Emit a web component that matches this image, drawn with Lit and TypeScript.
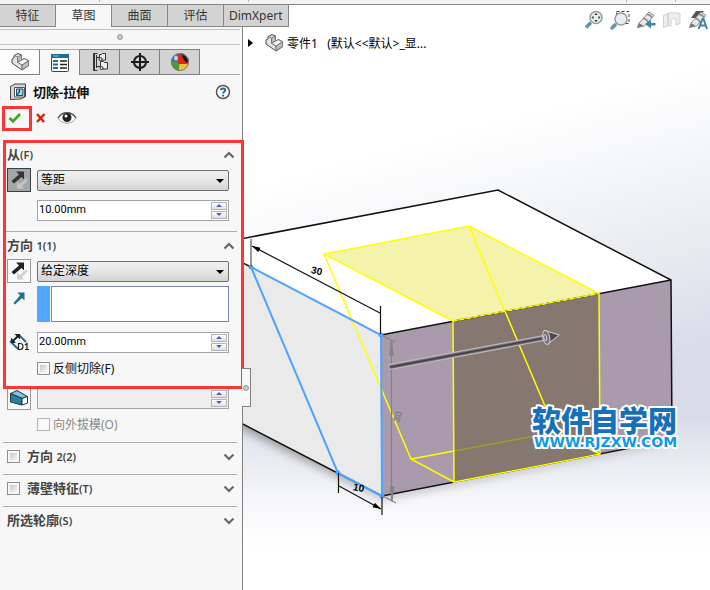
import { LitElement, html, css, svg, nothing } from "lit";
import { customElement, property } from "lit/decorators.js";

const partIcon = html`<svg width="20" height="20" viewBox="0 0 20 20" aria-hidden="true">
  <g stroke="#4a4a4a" stroke-width="1" stroke-linejoin="round">
    <path d="M4 3.5 8 1.5l3.5 1.5v5l3-1.3 4 2v5L12 18 2 11V7l2-1z" fill="#e4e4e4"/>
    <path d="M4 3.5 7.500 5v5.200L12 13v5" fill="none" stroke="#777"/>
    <path d="M7.500 5l4-2v5l-4 2zM12 13l6.500-4.300v5L12 18z" fill="#bdbdbd" stroke="#777"/>
    <path d="M7.500 10.200l4-2.200 3-1.300 4 2L12 13z" fill="#f4f4f4" stroke="#777"/>
  </g></svg>`;

const listIcon = html`<svg width="20" height="20" viewBox="0 0 20 20" aria-hidden="true">
  <rect x="1.500" y="1.500" width="17" height="17" rx="1" fill="#fff" stroke="#33434f"/>
  <path d="M1 1h18v4H1z" fill="#1f6d94"/><path d="M3 3h6" stroke="#7fc1e0"/>
  <path d="M3 7h5v2H3zM3 10.500h5v2H3zM3 14h5v2H3z" fill="#1f6d94"/>
  <path d="M10 8h7M10 11.500h7M10 15h7" stroke="#222" stroke-width="1.500"/></svg>`;

const treeIcon = html`<svg width="20" height="20" viewBox="0 0 20 20" aria-hidden="true">
  <g fill="#eee" stroke="#333"><path d="M4.500 1.500v17M6.500 5.500h4M6.500 14.500h4" fill="none"/>
  <path d="M3.500 1.500h4M3.500 18.500h4M3.500 1.500v17M6.500 3v13" fill="none"/>
  <path d="M9.500 2.500h2l1-1h3v6.500h-6zM10.500 9.500h3l1 1h3v6.500h-7z"/>
  <circle cx="10.500" cy="7" r="1.500"/><circle cx="11.500" cy="16" r="1.500"/></g></svg>`;

const targetIcon = html`<svg width="20" height="20" viewBox="0 0 20 20" aria-hidden="true">
  <circle cx="10" cy="10" r="6" fill="none" stroke="#1a1a1a" stroke-width="2"/>
  <path d="M10 1v18M1 10h18" stroke="#1a1a1a" stroke-width="2"/></svg>`;

const ballIcon = html`<svg width="20" height="20" viewBox="0 0 20 20" aria-hidden="true">
  <path d="M10 10V1a9 9 0 0 1 9 9z" fill="#333"/><path d="M10 10V1a9 9 0 0 0-9 9z" fill="#3b74c8"/>
  <path d="M10 10H1a9 9 0 0 0 8 9z" fill="#4d9c2d"/><path d="M9 19a9 9 0 0 0 10-9H10z" fill="#f0c33c"/>
  <path d="M6 3c5-3 9 1 12 9H8C8 8 7 5 6 3z" fill="#d92b1c"/><path d="M12 3c3 1 6 5 6 8-3-1-5-4-6-8z" fill="#111"/>
  <circle cx="10" cy="10" r="8.500" fill="none" stroke="#777"/><ellipse cx="6" cy="6" rx="2" ry="2.500" fill="#b9d3f4"/></svg>`;

const cutIcon = html`<svg width="18" height="18" viewBox="0 0 18 18" aria-hidden="true">
  <path d="M1.500 3.500 6 1h10.500v12.500L12 16l-10.500.5z" fill="#d6d6d6" stroke="#444"/>
  <path d="M5.500 4.500h10v9.500h-10z" fill="#f6f6f6" stroke="#555"/>
  <path d="M7.500 6h6.500v6.500H7.500z" fill="#9bd5ee" stroke="#1c4a63"/><path d="M7.500 12.500l3-3V6" fill="#2a7da6" stroke="#1c4a63"/></svg>`;

const helpIcon = html`<svg width="16" height="16" viewBox="0 0 16 16" aria-hidden="true">
  <circle cx="8" cy="8" r="6.500" fill="#fff" stroke="#555" stroke-width="1.500"/>
  <path d="M5.800 6.200C6 3.800 10.200 3.800 10.200 6.300 10.200 7.800 8 7.800 8 9.600M8 10.800v1.600" fill="none" stroke="#1f6d94" stroke-width="2"/></svg>`;

const okIcon = html`<svg width="14" height="12" viewBox="0 0 14 12" aria-hidden="true">
  <path d="M1.500 6 5 9.500 12 2" fill="none" stroke="#3aa51d" stroke-width="2.600"/></svg>`;
const cancelIcon = html`<svg width="12" height="12" viewBox="0 0 12 12" aria-hidden="true">
  <path d="M2 2l7 8M9.500 2 2 10" fill="none" stroke="#d92000" stroke-width="2.400"/></svg>`;
const eyeIcon = html`<svg width="20" height="14" viewBox="0 0 20 14" aria-hidden="true">
  <path d="M1 7C5 0 15 0 19 7c-4 7-14 7-18 0z" fill="#fff" stroke="#a0a0a0"/>
  <path d="M1 7C5 0 15 0 19 7" fill="none" stroke="#555" stroke-width="1.500"/>
  <circle cx="10" cy="6.500" r="4.500" fill="#222"/><circle cx="9" cy="5" r="1.500" fill="#fff"/></svg>`;

const flipIcon = (a: string, b: string) => html`<svg width="20" height="20" viewBox="0 0 20 20" aria-hidden="true">
  <path d="M7 1.500h8v8l-2.500-2.500L5 13.500 2.500 11 10 4.500z" fill="${a}"/>
  <path d="M17.500 8.500l1.500 1.500-6 6 2 2.500H8v-7l2.500 2.500z" fill="${b}"/></svg>`;
const arrowIcon = html`<svg width="14" height="14" viewBox="0 0 14 14" aria-hidden="true">
  <path d="M5.500 1.500h7v8l-2.500-2.500-7 6.500-1.500-1.500L8 4.500z" fill="#22708f"/></svg>`;
const depthIcon = html`<svg width="20" height="20" viewBox="0 0 20 20" aria-hidden="true">
  <path d="M1 9l8 8M9.500 2.500 17 10" stroke="#22708f" stroke-width="2"/>
  <path d="M3 10 10 3" stroke="#222" stroke-width="2"/><path d="M2 11V5.500L7 11zM11 2H5.500l5.500 5.500z" fill="#222"/>
  <path d="M9.500 11.500v6h2q2.500-.5 2.500-3t-2.500-3zM16 13l2-1.500v6M16 17.500h4" fill="none" stroke="#222" stroke-width="1.200"/></svg>`;
const draftIcon = html`<svg width="20" height="18" viewBox="0 0 20 18" aria-hidden="true">
  <g stroke="#1b3644" stroke-linejoin="round"><path d="M1.500 4.500 8 1.500l10.500 6-5.500 2z" fill="#79c4e0"/>
  <path d="M1.500 4.500 13 9.500V16l-11.500-3z" fill="#2b7fa3"/><path d="M13 9.500l5.500-2V14L13 16z" fill="#fff"/></g></svg>`;

const lens = (x: number, y: number, r: number) => svg`
  <path d="M${x - r + 1} ${y + r - 1}L${x - r - 4} ${y + r + 4}" stroke="#5a97b1" stroke-width="3.500"/>
  <circle cx=${x} cy=${y} r=${r} fill="#e6f0f4" stroke="#999" stroke-width="1.500"/>`;
const pen = svg`<path d="M1.500 17.500 3 13 13 2l5 3.500L8.500 16z" fill="#e8e8e8" stroke="#8a8a8a"/>
  <path d="M7 8.500c2 0 4 1.500 5 3.500M11 4.500c2 0 4 1.500 5 3" fill="none" stroke="#8a8a8a" stroke-width="1.500"/>
  <path d="M1.500 17.500 3 13.500c2 0 3 1 4 2.500z" fill="#777"/>`;
const viewTools = [
  { name: "整屏显示全图", art: svg`${lens(12, 7.5, 6)}<path d="M12 3l1.800 2h-3.600zM12 12l1.800-2h-3.600zM7.500 7.500l2-1.800v3.600zM16.500 7.500l-2-1.800v3.600z" fill="#333"/>` },
  { name: "局部放大", art: svg`<path d="M6.500 1.500h12.500v12H6.500z" fill="none" stroke="#444" stroke-dasharray="3 2"/>${lens(11, 9, 6)}` },
  { name: "上一视图", art: svg`${pen}<path d="M19.500 15.500H15v3L9 14l6-4v3h4.500z" fill="#3d86a6"/>` },
  { name: "剖面视图", art: svg`<g fill="#ededed" stroke="#cfcfcf"><path d="M1.500 5.500 6 3.500v12l-4.500 2zM6 3.500c3-1 7-1 12 0v10l-4 1.500v-6c-3-1-5 0-5 1v6l-3-.5z"/></g>` },
  { name: "动态注解视图", art: svg`<path d="M3 8 8 1h8l-6 7z" fill="#555"/>${pen}<path d="M10.500 19l4-10h1l3.500 10M12 15.500h6" fill="none" stroke="#3d86a6" stroke-width="2"/>` },
];

const controls = css`
  *, ::before, ::after { box-sizing: border-box; }
  button, input, select { font: inherit; color: inherit; margin: 0; }
  button { padding: 0; border: 0; background: none; display: flex; align-items: center; justify-content: center; }
  svg { display: block; flex: none; }
  .tick { appearance: none; flex: none; width: 13px; height: 13px; border: 1px solid #8e8f8f; background: linear-gradient(135deg, #c5c8cc, #f6f6f6) content-box #f4f4f4; padding: 2px; }
  .tick:disabled { border-color: #b4b4b4; background: #fafafa; }
`;

@customElement("spin-field")
export class SpinField extends LitElement {
  @property() label = "";
  @property() value = "";
  @property({ type: Boolean }) disabled = false;
  static styles = [controls, css`
    :host { display: block; flex: 1; min-width: 0; }
    .field { display: flex; align-items: center; height: 21px; border: 1px solid #a5a5a8; background: #fff; padding-right: 1px; }
    .off { background: #efefef; }
    input { flex: 1; min-width: 0; border: 0; background: none; padding: 0 1px; font-family: Roboto, sans-serif; font-size: 11px; outline: 0; color: #000; }
    .spin { display: grid; gap: 1px; }
    .spin button { width: 16px; height: 8px; border: 1px solid #b3b3ba; background: linear-gradient(#fff, #dfdfe2); }
  `];
  render() {
    const arrow = (d: string) => html`<svg width="6" height="3" viewBox="0 0 6 3" aria-hidden="true"><path d=${d} fill="#4c62b5"/></svg>`;
    return html`<div class="field ${this.disabled ? "off" : ""}">
      <input type="text" aria-label=${this.label} .value=${this.value} ?disabled=${this.disabled}>
      <div class="spin">
        <button aria-label="增加" ?disabled=${this.disabled}>${arrow("M0 3 3 0 6 3z")}</button>
        <button aria-label="减少" ?disabled=${this.disabled}>${arrow("M0 0 3 3 6 0z")}</button>
      </div></div>`;
  }
}

@customElement("panel-section")
export class PanelSection extends LitElement {
  @property() name = "";
  @property() key = "";
  @property({ type: Boolean }) open = false;
  @property({ type: Boolean }) optional = false;
  static styles = [controls, css`
    :host { display: block; margin: 0 5px 0 3px; border-top: 1px solid #adadad; }
    header { display: flex; align-items: center; gap: 7px; height: 27px; padding: 0 2px 0 4px; }
    header.shut { height: 31px; padding-bottom: 4px; }
    h2 { flex: 1; margin: 0; font-size: 13px; line-height: 18px; font-weight: 700; color: #444; }
    .key { font-size: 11px; font-weight: 600; }
    .body { padding: 0 8px 0 4px; }
  `];
  render() {
    const title = html`${this.name}<span class="key">${this.key}</span>`;
    return html`<header class=${this.open ? "" : "shut"}>
      ${this.optional ? html`<input class="tick" type="checkbox" id="on">` : nothing}
      <h2>${this.optional ? html`<label for="on">${title}</label>` : title}</h2>
      <button aria-label="展开或折叠" aria-expanded=${this.open}>
        <svg width="12" height="10" viewBox="0 0 12 10"><path d=${this.open ? "M1.500 7.500 6 3l4.500 4.500" : "M1.500 2.500 6 7l4.500-4.500"} fill="none" stroke="#666" stroke-width="2.200"/></svg>
      </button></header>
      ${this.open ? html`<div class="body"><slot></slot></div>` : nothing}`;
  }
}

@customElement("model-scene")
export class ModelScene extends LitElement {
  static styles = css`
    :host { display: block; position: absolute; inset: 0; overflow: hidden;
      background: linear-gradient(#fff0 70%, #ffffffc0 84%, #fff 93%), linear-gradient(165deg, #fff 26%, #eef0f4 45%, #d9dce8 66%); }
    svg { display: block; width: 100%; height: 100%; }
    text { font-family: "Liberation Sans Narrow", "Liberation Sans", sans-serif; font-weight: 700; font-size: 10px; }
    .brand { font-family: "Noto Sans CJK SC", sans-serif; font-weight: 900; font-size: 29px; fill: #1770b8; }
    .site { font-family: "DejaVu Sans", sans-serif; font-size: 14px; fill: #109ae2; }
    .brand, .site { stroke: #fff; stroke-width: 4px; stroke-linejoin: round; paint-order: stroke; }
  `;
  render() {
    return html`<svg viewBox="243 5 467 585" preserveAspectRatio="xMinYMin meet" role="img" aria-label="拉伸切除预览">
      <defs>
        <filter id="soft" x="-10%" y="-10%" width="120%" height="130%"><feGaussianBlur stdDeviation="5"/></filter>
        <linearGradient id="rod" x1="0" y1="0" x2="0" y2="1"><stop offset="0" stop-color="#b0aab2"/><stop offset=".5" stop-color="#3e3841"/><stop offset="1" stop-color="#8f8992"/></linearGradient>
        <marker id="tip" viewBox="0 0 10 6" refX="10" refY="3" markerWidth="9" markerHeight="5" markerUnits="userSpaceOnUse" orient="auto-start-reverse"><path d="M0 0l10 3-10 3z"/></marker>
      </defs>
      <path d="M230 400l152 94 290-56v3L382 499 230 424z" fill="#555" opacity=".5" filter="url(#soft)"/>
      <path d="M235 240l263-50 173 90-290 55-146-76z" fill="#fff"/>
      <path d="M235 259l146 76 1 161-147-75z" fill="#eaeaea"/>
      <path d="M381 335l290-55 1 160-290 56z" fill="#a99bac"/>
      <path d="M324 254l145-28 130 67.500-146 27.500z" fill="#f4f3ab"/>
      <path d="M453 321l146-27.500 1 160.500-146 28z" fill="#867870"/>
      <path d="M235 240l263-50 173 90 1 160-290 56-147-76M381 335l290-55M235 259l16 8" fill="none" stroke="#111" stroke-width="1.500"/>
      <path d="M454 451l102-19" stroke="#a39b2c" stroke-width="1.500"/>
      <g fill="none" stroke="#ff0" stroke-width="1.500">
        <path d="M453 321 324 254l145-28 130 67.500 1 160.500-146 28-1-161"/>
        <path d="M324 254l87 205 43 23M411 459l43-8M469 226l87 206 44 22"/>
        <path d="M453 321l146-27.500" stroke="#c9c32b"/><path d="M453 321l146-27.500" stroke-dasharray="4 3"/>
      </g>
      <path d="M251 267l130 68 1 161-44-23z" fill="none" stroke="#4fa3ff" stroke-width="2"/>
      <g fill="#4fa3ff"><circle cx="251" cy="267" r="2.500"/><circle cx="381" cy="335" r="2.500"/><circle cx="338" cy="473" r="2.500"/><circle cx="382" cy="496" r="2.500"/></g>
      <path d="M251 239v28" stroke="#777" stroke-width="1.500"/>
      <g stroke="#111" stroke-width="1.200">
        <path d="M380.500 306v28M338.500 473v20M382 497v18"/>
        <path d="M252 246l128 67M339 486l42 23" marker-start="url(#tip)" marker-end="url(#tip)"/>
      </g>
      <g stroke="#858087" stroke-width="1.200" fill="#858087"><path d="M383 336l12 6M383 496l13 7M391.500 341v160" fill="none"/>
        <path d="M391.500 341l-1.500 14h3zM392 501l-1.500-14h3z"/></g>
      <text x="311" y="274" transform="rotate(12 315 271)">30</text>
      <text x="353" y="491" transform="rotate(12 358 488)">10</text>
      <text x="392" y="421" transform="rotate(-72 397 417)" fill="#858087">30</text>
      <g transform="rotate(-10.700 390 367)">
        <rect x="389" y="364.500" width="160" height="5" rx="2" fill="url(#rod)" stroke="#bdbabf"/>
        <path d="M549 360l13 7-13 7z" fill="#4b454e" stroke="#ccc"/><ellipse cx="549" cy="367" rx="3.500" ry="7" fill="#77707a" stroke="#ccc"/>
        <ellipse cx="548" cy="367" rx="1.500" ry="3" fill="none" stroke="#ccc"/>
      </g>
      <text class="brand" x="532" y="432">软件自学网</text>
      <text class="site" x="534" y="447">WWW.RJZXW.COM</text>
    </svg>`;
  }
}

@customElement("app-root")
export class AppRoot extends LitElement {
  static styles = [controls, css`
    :host { display: grid; grid-template: 5px auto 1fr / 243px minmax(0, 1fr); min-height: 100vh; background: #f7f7f7; color: #111;
      font: 12px/16px "Noto Sans", "Noto Sans CJK SC", sans-serif; }
    .strip { grid-area: 1 / 1 / 2 / 3; background: #f3f3f3; border-bottom: 1px solid #868686; }
    .tabs { grid-area: 2 / 1 / 3 / 3; justify-self: start; display: flex; z-index: 1; }
    .tabs button { min-width: 56px; height: 22px; padding: 0 5px; color: #333; background: #d3d3d3; border: solid #868686; border-width: 0 1px 1px 0; }
    .tabs button.on { background: #f7f7f7; border-bottom: 0; }
    .panel { grid-area: 3 / 1 / 4 / 2; position: relative; z-index: 1; border-right: 1px solid #808080; }
    .grip { display: flex; align-items: center; justify-content: center; height: 16px; margin: 2px 2px 4px 0; border: solid #c2c2c2; border-width: 1px 0; }
    .dot { width: 6px; height: 6px; border: 1px solid #999; border-radius: 50%; background: #ccc; }
    .modes { display: flex; height: 26px; margin-right: 2px; border-bottom: 1px solid #a8a8a8; }
    .modes button { width: 40px; height: 26px; background: #d3d3d3; border: solid #808080; border-width: 1px 1px 1px 0; }
    .modes button.plain { background: #fdfdfd; border-top-color: #aaa; }
    .modes button.on { background: #f7f7f7; border-bottom: 0; border-top-color: #aaa; }
    .title { display: flex; align-items: center; gap: 6px; height: 33px; padding: 0 11px 0 9px; }
    h1 { flex: 1; margin: 0; font-size: 13px; line-height: 18px; font-weight: 700; }
    .actions { display: flex; align-items: center; height: 32px; padding: 0 0 12px 2px; }
    .accept { width: 30px; height: 25px; border: 3px solid #ff3535; padding-right: 4px; }
    .cancel { margin: 0 10px 0 3px; }
    .marked { position: relative; }
    .marked::after { content: ""; position: absolute; left: 3px; right: -2px; top: 0; height: 249px; border: 3px solid #ff3535; pointer-events: none; }
    .row { display: flex; align-items: center; gap: 6px; height: 24px; }
    .lead { flex: none; width: 24px; display: flex; justify-content: center; }
    .row.next { margin-top: 6px; }
    .last { margin-bottom: 9px; }
    .flip { flex: none; width: 24px; height: 24px; border: 1px solid #999; background: #fafafa; }
    .flip.down { background: #a6a6a6; border-color: #34404d; }
    .combo { position: relative; flex: 1; min-width: 0; }
    .combo::after { content: ""; position: absolute; right: 5px; top: 9px; border: solid transparent; border-width: 4px 4px 0; border-top-color: #000; }
    select { appearance: none; display: block; width: 100%; height: 21px; padding: 0 3px; border: 1px solid #707070; border-radius: 2px; background: linear-gradient(#f0f0f0, #e6e6e6 50%, #d3d3d3); color: #000; }
    .picks { display: flex; gap: 6px; height: 36px; margin: 3px 0 8px; }
    .picks .lead { padding-top: 5px; }
    .pickbox { flex: 1; display: flex; gap: 1px; min-width: 0; }
    .swatch { width: 13px; background: #54a7ff; }
    .pickbox input { flex: 1; min-width: 0; height: 36px; border: 1px solid #7c86a3; background: #fff; }
    .check { display: flex; align-items: center; gap: 3px; height: 32px; padding: 0 0 3px 30px; }
    .check.off { color: #8a8a8a; }
    .handle { position: absolute; left: 242px; top: 341px; width: 9px; height: 39px; padding: 0; border: 1px solid #808080; border-left: 0; background: #f7f7f7; }
    .view { grid-area: 2 / 2 / 4 / 3; position: relative; background: #fff; }
    .tools { position: relative; display: flex; justify-content: flex-end; gap: 6px; height: 28px; padding: 2px 2px 0 0; }
    .tree { position: relative; display: flex; align-items: center; height: 20px; color: #000; }
    .tree button { width: 12px; margin: 0 8px 0 1px; }
    .tree span { margin-left: 3px; padding-top: 2px; white-space: pre; }
  `];

  render() {
    return html`
      <div class="strip"><svg width="100%" height="3" aria-hidden="true">
        ${[99, 248, 626, 675].map((x) => svg`<rect x=${x} width="1" height="2" fill="#b5b5b5"/>`)}</svg></div>
      <nav class="tabs">
        ${["特征", "草图", "曲面", "评估", "DimXpert"].map((t) => html`<button class=${t === "草图" ? "on" : ""}>${t}</button>`)}
      </nav>
      <aside class="panel">
        <div class="grip"><span class="dot"></span></div>
        <div class="modes">
          <button class="plain" aria-label="设计树">${partIcon}</button>
          <button class="on" aria-label="属性">${listIcon}</button>
          <button aria-label="配置">${treeIcon}</button>
          <button aria-label="尺寸专家">${targetIcon}</button>
          <button aria-label="外观">${ballIcon}</button>
        </div>
        <div class="title">${cutIcon}<h1>切除-拉伸</h1><button aria-label="帮助">${helpIcon}</button></div>
        <div class="actions">
          <button class="accept" aria-label="确定">${okIcon}</button>
          <button class="cancel" aria-label="取消">${cancelIcon}</button>
          <button aria-label="预览">${eyeIcon}</button>
        </div>
        <div class="marked">
          <panel-section name="从" key="(F)" open>
            <div class="row"><button class="flip down" aria-label="反向">${flipIcon("#333", "#c4c4c4")}</button>
              <div class="combo"><select aria-label="开始条件"><option>等距</option></select></div></div>
            <div class="row next last"><span class="lead"></span><spin-field label="等距值" value="10.00mm"></spin-field></div>
          </panel-section>
          <panel-section name="方向 " key="1(1)" open>
            <div class="row"><button class="flip" aria-label="反向">${flipIcon("#222", "#d0d0d0")}</button>
              <div class="combo"><select aria-label="终止条件"><option>给定深度</option></select></div></div>
            <div class="picks"><span class="lead">${arrowIcon}</span>
              <div class="pickbox"><span class="swatch"></span><input type="text" aria-label="拉伸方向"></div></div>
            <div class="row"><span class="lead">${depthIcon}</span><spin-field label="深度" value="20.00mm"></spin-field></div>
            <label class="check"><input class="tick" type="checkbox">反侧切除(F)</label>
            <div class="row"><button class="flip" aria-label="拔模开/关">${draftIcon}</button><spin-field label="拔模角度" disabled></spin-field></div>
            <label class="check off"><input class="tick" type="checkbox" disabled>向外拔模(O)</label>
          </panel-section>
        </div>
        <panel-section name="方向 " key="2(2)" optional></panel-section>
        <panel-section name="薄壁特征" key="(T)" optional></panel-section>
        <panel-section name="所选轮廓" key="(S)"></panel-section>
        <button class="handle" aria-label="折叠面板"><span class="dot"></span></button>
      </aside>
      <main class="view">
        <model-scene></model-scene>
        <div class="tools">${viewTools.map((t) => html`<button aria-label=${t.name}><svg width="20" height="20" viewBox="0 0 20 20">${t.art}</svg></button>`)}</div>
        <div class="tree"><button aria-label="展开"><svg width="5" height="8" viewBox="0 0 5 8"><path d="M0 0l5 4-5 4z"/></svg></button>
          ${partIcon}<span>零件1   (默认&lt;&lt;默认&gt;_显...</span></div>
      </main>`;
  }
}
